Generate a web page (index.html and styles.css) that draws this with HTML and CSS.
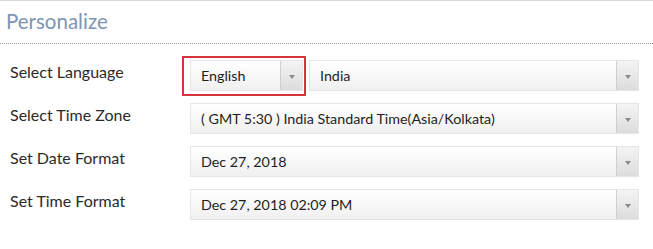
FILE: index.html
```html
<!DOCTYPE html>
<html lang="en">
<head>
    <meta charset="UTF-8">
    <meta name="viewport" content="width=device-width, initial-scale=1.0">
    <title>Personalize</title>
    <link rel="stylesheet" href="styles.css">
</head>
<body>
    <div class="panel">
        <header class="panel-title">Personalize</header>
        <div class="form">
            <label class="field-label">Select Language</label>
            <div class="field-controls">
                <div class="highlight">
                    <div class="dropdown lang">
                        <span class="dropdown-value">English</span>
                        <span class="dropdown-arrow"></span>
                    </div>
                </div>
                <div class="dropdown country">
                    <span class="dropdown-value">India</span>
                    <span class="dropdown-arrow"></span>
                </div>
            </div>

            <label class="field-label">Select Time Zone</label>
            <div class="dropdown">
                <span class="dropdown-value">( GMT 5:30 ) India Standard Time(Asia/Kolkata)</span>
                <span class="dropdown-arrow"></span>
            </div>

            <label class="field-label">Set Date Format</label>
            <div class="dropdown">
                <span class="dropdown-value">Dec 27, 2018</span>
                <span class="dropdown-arrow"></span>
            </div>

            <label class="field-label">Set Time Format</label>
            <div class="dropdown">
                <span class="dropdown-value">Dec 27, 2018 02:09 PM</span>
                <span class="dropdown-arrow"></span>
            </div>
        </div>
    </div>
</body>
</html>
```

FILE: styles.css
```css
body {
    margin: 0;
    padding: 0;
    font-family: Lato, "Open Sans", sans-serif;
    background: #fff;
    color: #333;
}
.panel {
    border-top: 1px solid #d6d6d6;
}
.panel-title {
    color: #7d95b3;
    font-size: 20.5px;
    padding: 8px 6px 10px;
    border-bottom: 1px dotted #9a9a9a;
}
.form {
    display: grid;
    grid-template-columns: 190px 449px;
    row-gap: 12px;
    padding-top: 16px;
}
.field-label {
    font-size: 16px;
    padding: 2px 0 0 10px;
    color: #2a2a2a;
}
.field-controls {
    display: flex;
    gap: 6px;
}
.highlight {
    position: relative;
}
.highlight::after {
    content: "";
    position: absolute;
    top: -4px;
    left: -8px;
    right: -3px;
    bottom: -5px;
    border: 2px solid #d6333b;
}
.dropdown {
    display: flex;
    height: 29px;
    border: 1px solid #e6e6e6;
    background: linear-gradient(#ffffff, #f0f0f0);
    font-size: 14.3px;
    color: #1e1e1e;
}
.dropdown.lang {
    width: 111px;
}
.dropdown.country {
    width: 328px;
}
.dropdown-value {
    flex: 1;
    align-self: center;
    padding-left: 10px;
    white-space: nowrap;
    overflow: hidden;
}
.dropdown-arrow {
    width: 21px;
    border-left: 1px solid #cfcfcf;
    background: linear-gradient(#f4f4f4, #dcdcdc);
    display: flex;
    align-items: center;
    justify-content: center;
}
.dropdown-arrow::before {
    content: "";
    border-left: 3px solid transparent;
    border-right: 3px solid transparent;
    border-top: 4px solid #8a8a8a;
    margin-top: 2px;
}
```
